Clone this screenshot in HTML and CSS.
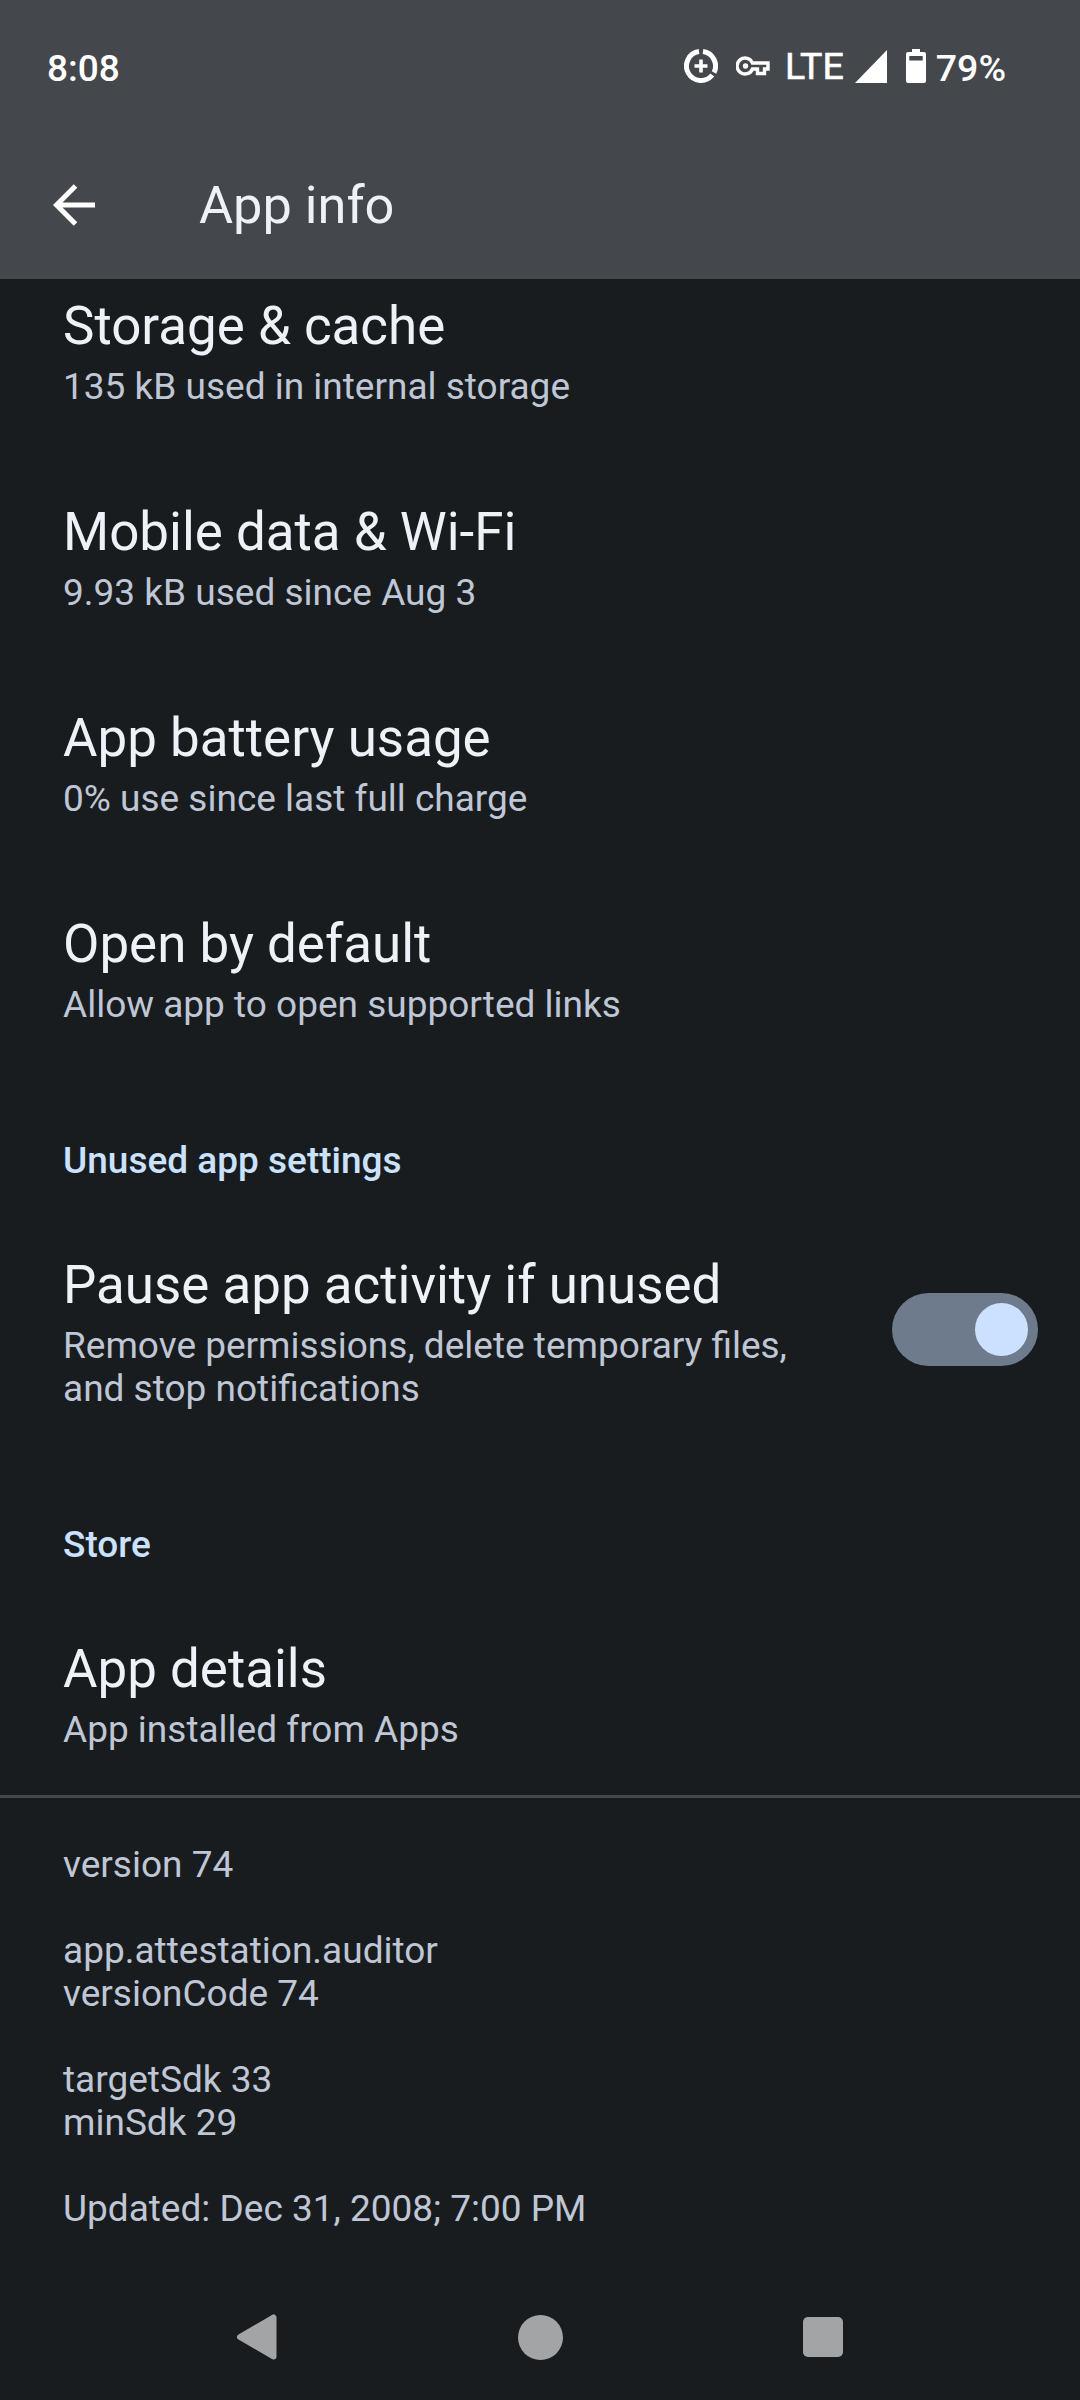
FILE: index.html
```
<!DOCTYPE html>
<html lang="en"><head><meta charset="utf-8"><title>App info</title><link rel="stylesheet" href="styles.css"></head>
<body>
<header class="top">
<div class="status"><span class="clock">8:08</span>
<svg class="saver" width="34" height="34" viewBox="0 0 34 34" fill="none" stroke="#fff" stroke-width="5"><path d="M19 2.600A14.500 14.500 0 0 1 30 23.500M28.300 26A14.500 14.500 0 1 1 15 2.600"/><path d="M17 10.500v13M10.500 17h13" stroke-width="3.600"/></svg>
<svg class="key" width="34" height="20" viewBox="0 0 34 20" fill="none" stroke="#fff" stroke-width="3.400"><path d="M16.500 7A8 8 0 1 0 16.500 13H21.500V17.500H28.500V13H32V7Z"/><circle cx="9.500" cy="10" r="2.700" fill="#fff" stroke="none"/></svg>
<span class="lte">LTE</span>
<svg class="signal" width="32" height="33" viewBox="0 0 32 33"><path d="M32 0V33H0Z" fill="#fff"/></svg>
<svg class="battery" width="20" height="34" viewBox="0 0 20 34"><path d="M6 0h8v3h4q2 0 2 2v27q0 2-2 2H2q-2 0-2-2V5q0-2 2-2h4Z" fill="#fff"/><path d="M3.300 7h13.400v4.500H3.300Z" fill="#44474b"/></svg>
<span class="pct">79%</span></div>
<div class="bar"><svg width="42" height="42" viewBox="0 0 42 42" fill="none" stroke="#fff" stroke-width="5"><path d="M22.500 2L3.500 21L22.500 40M3.500 21H42"/></svg><h1>App info</h1></div>
</header>
<main>
<section class="item"><h2>Storage &amp; cache</h2><p>135 kB used in internal storage</p></section>
<section class="item"><h2>Mobile data &amp; Wi-Fi</h2><p>9.93 kB used since Aug 3</p></section>
<section class="item"><h2>App battery usage</h2><p>0% use since last full charge</p></section>
<section class="item"><h2>Open by default</h2><p>Allow app to open supported links</p></section>
<h3>Unused app settings</h3>
<section class="item pause"><div><h2>Pause app activity if unused</h2><p>Remove permissions, delete temporary files,<br>and stop notifications</p></div><div class="toggle"><span class="thumb"></span></div></section>
<h3>Store</h3>
<section class="item details"><h2>App details</h2><p>App installed from Apps</p></section>
<footer><p>version 74</p><p>app.attestation.auditor<br>versionCode 74</p><p>targetSdk 33<br>minSdk 29</p><p>Updated: Dec 31, 2008; 7:00 PM</p></footer>
</main>
<nav><svg width="42" height="46" viewBox="0 0 42 46"><path d="M37.500 3.500V42.500L4 23Z" fill="#a3a4a5" stroke="#a3a4a5" stroke-width="6" stroke-linejoin="round"/></svg><span class="home"></span><span class="recent"></span></nav>
</body></html>
```
FILE: styles.css
```
*{box-sizing:border-box}
body{margin:0;width:1080px;height:2400px;background:#191c1e;color:#eef1f8;font-family:Roboto,sans-serif;overflow:hidden;display:flex;flex-direction:column}
h1,h2,h3,p{margin:0;font-weight:400;white-space:nowrap}
svg{display:block;flex:none}
.top{height:279px;background:#44474b;flex:none}
.status{height:132px;display:flex;align-items:center;padding:0 74px 0 47px;color:#fff;font-size:37px;font-weight:500}
.clock{margin-right:auto;padding-top:4px}
.saver{margin-right:18px}
.key{margin-right:15px}
.lte{margin-right:11px;font-size:37.500px;font-weight:400;-webkit-text-stroke:.6px #fff}
.signal{margin-right:19px}
.battery{margin-right:10px}
.pct{padding-top:4px;font-size:37.500px}
.bar{height:147px;display:flex;align-items:center;padding:0 0 1px 53px}
.bar h1{font-size:52.300px;line-height:61px;margin-left:104px}
main{flex:1}
.item{height:206px;padding:16px 0 0 63px}
.item h2{font-size:52.900px;line-height:62px}
.item p{font-size:37px;line-height:43px;margin-top:8px;color:#bfc6d5}
h3{font-size:37px;line-height:43px;font-weight:500;color:#cbe2ff;padding-left:63px;margin-top:36px}
.pause{display:flex;justify-content:space-between;padding-right:42px;margin-top:56px;height:249px}
.toggle{width:146px;height:73px;border-radius:37px;background:#6e7b8d;display:flex;align-items:center;justify-content:flex-end;padding-right:10px;margin-top:39px}
.thumb{width:53px;height:53px;border-radius:50%;background:#cce1ff}
.details{margin-top:56px;height:173px}
footer{border-top:3px solid #44474a;padding:45px 0 0 63px}
footer p{font-size:37px;line-height:43px;color:#bfc6d5;margin-bottom:43px}
nav{height:126px;flex:none;display:flex;align-items:center;padding-left:236px}
.home{width:45px;height:45px;border-radius:50%;background:#a3a4a5;margin-left:240px}
.recent{width:40px;height:40px;border-radius:5px;background:#a3a4a5;margin-left:240px}
```
